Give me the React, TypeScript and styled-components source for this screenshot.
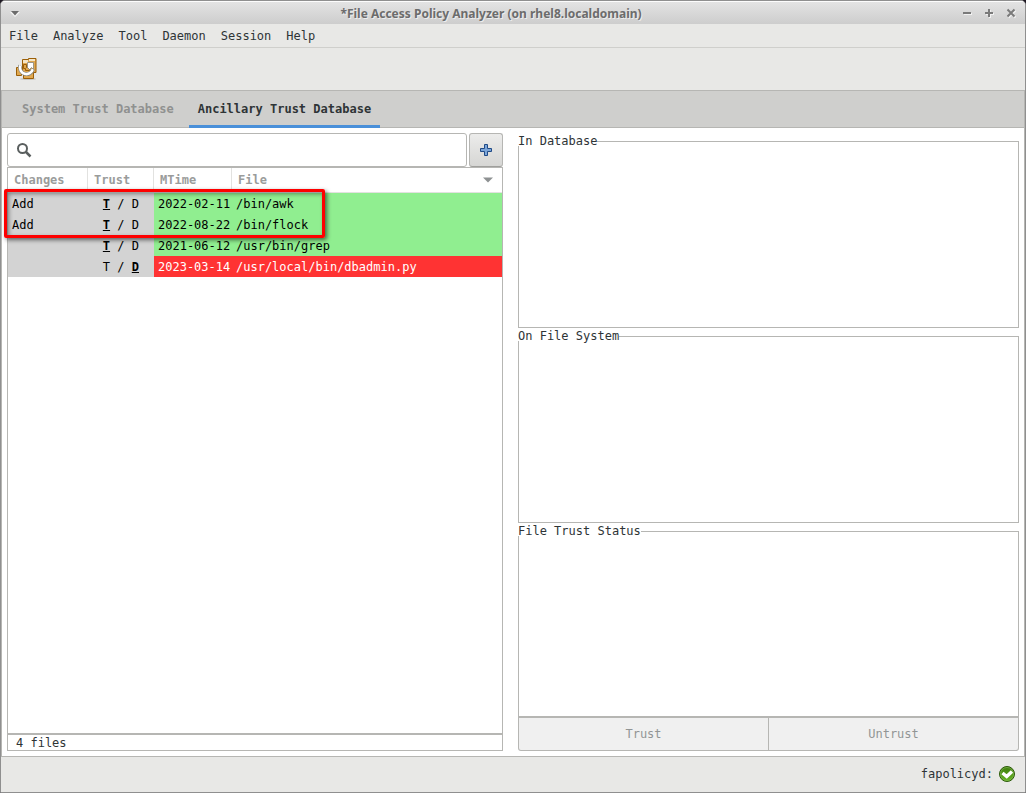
import React from "react";
import styled, { createGlobalStyle, css } from "styled-components";

const mono = `"DejaVu Sans Mono", "Liberation Mono", monospace`;
const line = "#b6b6b3";
const ink = "#2e3436";

const GlobalStyle = createGlobalStyle`
  *, *::before, *::after { box-sizing: border-box; }
  body { margin: 0; background: #1d1722; color: ${ink}; font: 12px/16px ${mono}; }
  button, input { font: inherit; color: inherit; margin: 0; }
`;

const Window = styled.div`
  display: flex;
  flex-direction: column;
  min-height: 100vh;
  border: 1px solid #8f8f8f;
  border-radius: 5px 5px 0 0;
  background: #e8e8e6;
  overflow: hidden;
`;

const TitleBar = styled.header`
  display: grid;
  grid-template-columns: 80px 1fr 124px;
  align-items: center;
  height: 23px;
  padding: 0 8px;
  border-top: 1px solid #fcfcfc;
  background: linear-gradient(#e3e3e3, #cdcdcd);
`;

const Title = styled.h1`
  margin: 0;
  padding-top: 2px;
  text-align: center;
  font: bold 12px/20px "Noto Sans", "Open Sans", sans-serif;
  color: #6c6c6c;
  text-shadow: 1px 1px 0 #ededed;
  white-space: nowrap;
`;

const WindowControls = styled.div`
  display: flex;
  justify-content: flex-end;
  gap: 10px;
`;

const GlyphButton = styled.button`
  display: flex;
  width: 12px;
  height: 12px;
  padding: 0;
  border: 0;
  background: none;
`;

const MenuBar = styled.nav`
  display: flex;
  gap: 15px;
  height: 24px;
  padding: 0 8px;
  border-bottom: 1px solid #cfcfcc;
`;

const MenuItem = styled.button`
  padding: 0;
  border: 0;
  background: none;
  line-height: 16px;
`;

const ToolBar = styled.div`
  display: flex;
  align-items: center;
  height: 42px;
  padding: 0 13px;
`;

const ToolButton = styled.button`
  display: flex;
  padding: 0;
  border: 0;
  background: none;
`;

const Notebook = styled.main`
  flex: 1;
  display: flex;
  flex-direction: column;
  border: 1px solid ${line};
  background: #fff;
`;

const TabStrip = styled.div`
  display: flex;
  gap: 6px;
  height: 37px;
  padding: 0 11px;
  background: #cfcfcd;
  box-shadow: inset 0 -1px 0 ${line};
`;

const Tab = styled.button<{ $active?: boolean }>`
  padding: 1px 9px 0;
  border: 0;
  border-bottom: 3px solid ${(p) => (p.$active ? "#4a90d9" : "transparent")};
  background: none;
  font-weight: bold;
  color: ${(p) => (p.$active ? ink : "#8f9190")};
`;

const Page = styled.div`
  flex: 1;
  display: grid;
  grid-template-columns: minmax(0, 496fr) minmax(0, 501fr);
  gap: 15px;
  padding: 5px;
`;

const Column = styled.section`
  display: flex;
  flex-direction: column;
`;

const SearchRow = styled.div`
  display: flex;
  gap: 2px;
  height: 34px;
`;

const SearchBox = styled.label`
  flex: 1;
  display: flex;
  align-items: center;
  gap: 8px;
  padding: 0 8px;
  border: 1px solid ${line};
  border-radius: 3px;
`;

const SearchInput = styled.input`
  flex: 1;
  min-width: 0;
  border: 0;
  outline: 0;
  background: none;
`;

const AddButton = styled.button`
  display: grid;
  place-items: center;
  width: 34px;
  padding: 0;
  border: 1px solid ${line};
  border-bottom-color: #9f9f9c;
  border-radius: 3px;
  background: linear-gradient(#ececeb, #d6d6d4);
`;

const ListFrame = styled.div`
  position: relative;
  flex: 1;
  border: 1px solid ${line};
`;

const FileTable = styled.table`
  width: 100%;
  table-layout: fixed;
  border-collapse: separate;
  border-spacing: 0;
`;

const HeadCell = styled.th<{ $last?: boolean }>`
  height: 25px;
  padding: 0 6px;
  border-right: ${(p) => (p.$last ? "0" : "1px solid #e2e2e0")};
  border-bottom: 1px solid #e2e2e0;
  text-align: left;
  color: #9a9c9b;
`;

const SortHeader = styled.div`
  display: flex;
  align-items: center;
  justify-content: space-between;
  padding-right: 3px;
`;

const tones = {
  plain: css`background: #d3d3d3; color: #000;`,
  good: css`background: #90ee90; color: #000;`,
  bad: css`background: #ff3333; color: #fff;`,
};

const Cell = styled.td<{ $tone: keyof typeof tones; $trust?: boolean }>`
  height: 21px;
  padding: 0 ${(p) => (p.$trust ? "15px" : "0")} 0 4px;
  text-align: ${(p) => (p.$trust ? "right" : "left")};
  white-space: pre;
  ${(p) => tones[p.$tone]}
`;

const Mark = styled.span<{ $on: boolean }>`
  font-weight: ${(p) => (p.$on ? "bold" : "normal")};
  text-decoration: ${(p) => (p.$on ? "underline" : "none")};
`;

const Highlight = styled.div`
  position: absolute;
  top: 21px;
  left: -4px;
  width: 321px;
  height: 49px;
  border: 3px solid #fe0000;
  border-radius: 2px;
  box-shadow: 2px 2px 4px rgba(0, 0, 0, 0.55), inset 2px 2px 4px rgba(0, 0, 0, 0.4);
  pointer-events: none;
`;

const FileCount = styled.div`
  height: 17px;
  padding: 0 8px;
  border: 1px solid ${line};
  line-height: 16px;
`;

const Details = styled(Column)`
  gap: 3px;
  padding-top: 3px;
`;

const Frame = styled.fieldset`
  flex: 1;
  min-width: 0;
  margin: 0;
  padding: 0;
  border: 1px solid ${line};
`;

const FrameTitle = styled.legend`
  margin-left: -1px;
  padding: 0;
  line-height: 10px;
`;

/* The buttons overlap the last frame so that their borders join. */
const Actions = styled.div`
  display: flex;
  height: 35px;
  margin-top: -5px;
`;

const ActionButton = styled.button`
  flex: 1;
  border: 1px solid ${line};
  border-top-width: 2px;
  background: #f0f0f0;
  color: #929595;
  &:first-child { border-radius: 0 0 0 3px; }
  &:last-child { border-left: 0; border-radius: 0 0 3px 0; }
`;

const StatusBar = styled.footer`
  display: flex;
  align-items: center;
  justify-content: flex-end;
  gap: 5px;
  height: 35px;
  padding: 0 9px 1px;
`;

const MenuGlyph = () => (
  <svg width="12" height="12" viewBox="0 0 12 12">
    <path d="M1 5h10L6 10z" fill="#f5f5f5" />
    <path d="M2 4h8L6 8.500z" fill="#6c6c6c" />
  </svg>
);

const ControlGlyph = ({ d }: { d: string }) => (
  <svg width="12" height="12" viewBox="0 0 12 12" fill="none" strokeWidth="2">
    <path d={d} stroke="#f2f2f2" transform="translate(1 1)" />
    <path d={d} stroke="#7a7a7a" />
  </svg>
);

const DeployIcon = () => (
  <svg width="24" height="24" viewBox="0 0 24 24">
    <ellipse cx="14" cy="22" rx="8" ry="1" fill="#000" opacity=".15" />
    <g fill="#e0a850" stroke="#9a5f08">
      <path d="M8.500 2.500h6v-1h7.500v14h-3v1h-10.500z" />
      <path d="M2.500 10.500h5v8h-5z" />
      <path d="M9.500 15.500h10v6h-10z" />
    </g>
    <path d="M9 3h5v3h-5zM15 2h6v2h-6z" fill="#f6e6c6" />
    <path d="M9.500 7.500h3v3h3v3h-4v-2h-2z" fill="#e0a850" stroke="#9a5f08" />
    <path d="M18.800 12a6.500 6.500 0 1 1-12.500-3.500" fill="none" stroke="#85857c" strokeWidth="4" />
    <path d="M18.800 12a6.500 6.500 0 1 1-12.500-3.500" fill="none" stroke="#fff" strokeWidth="2.600" />
    <path d="M13.500 5.500h6v7l-2-2-2 2-2-2z" fill="#fff" stroke="#85857c" strokeWidth=".8" />
  </svg>
);

const SearchIcon = () => (
  <svg width="16" height="16" viewBox="0 0 16 16" fill="none" stroke="#5a5f5f">
    <circle cx="6.500" cy="6.500" r="4.500" strokeWidth="2" />
    <path d="M10 10l4.500 4.500" strokeWidth="2.500" />
  </svg>
);

const PlusIcon = () => (
  <svg width="14" height="14" viewBox="0 0 14 14">
    <path
      d="M5.500 1.500h3v4h4v3h-4v4h-3v-4h-4v-3h4z"
      fill="#7ba5d8"
      stroke="#204a87"
      strokeLinejoin="round"
    />
  </svg>
);

const SortArrow = () => (
  <svg width="10" height="6" viewBox="0 0 10 6">
    <path d="M0 .500h10L5 5.500z" fill="#8e9192" />
  </svg>
);

const OkIcon = () => (
  <svg width="18" height="18" viewBox="0 0 18 18">
    <defs>
      <linearGradient id="ok" x1="0" y1="0" x2="0" y2="1">
        <stop offset="0" stopColor="#3c7a0c" />
        <stop offset="1" stopColor="#68b723" />
      </linearGradient>
    </defs>
    <circle cx="9" cy="9" r="7.500" fill="url(#ok)" stroke="#2c5a0a" />
    <circle cx="9" cy="9" r="6.500" fill="none" stroke="#7fb850" strokeWidth=".7" />
    <path d="M4.500 8l4.200 3.500 5.300-5" fill="none" stroke="#fff" strokeWidth="3.400" />
  </svg>
);

type FileRow = { change: string; trusted: boolean; mtime: string; path: string };

const files: FileRow[] = [
  { change: "Add", trusted: true, mtime: "2022-02-11", path: "/bin/awk" },
  { change: "Add", trusted: true, mtime: "2022-08-22", path: "/bin/flock" },
  { change: "", trusted: true, mtime: "2021-06-12", path: "/usr/bin/grep" },
  { change: "", trusted: false, mtime: "2023-03-14", path: "/usr/local/bin/dbadmin.py" },
];

const menus = ["File", "Analyze", "Tool", "Daemon", "Session", "Help"];
const frames = ["In Database", "On File System", "File Trust Status"];

export default function App() {
  return (
    <>
      <GlobalStyle />
      <Window>
        <TitleBar>
          <GlyphButton aria-label="Window menu"><MenuGlyph /></GlyphButton>
          <Title>*File Access Policy Analyzer (on rhel8.localdomain)</Title>
          <WindowControls>
            <GlyphButton aria-label="Minimize"><ControlGlyph d="M2 6h8" /></GlyphButton>
            <GlyphButton aria-label="Maximize"><ControlGlyph d="M2 6h8M6 2v8" /></GlyphButton>
            <GlyphButton aria-label="Close"><ControlGlyph d="M2.500 2.500l7 7M9.500 2.500l-7 7" /></GlyphButton>
          </WindowControls>
        </TitleBar>
        <MenuBar>
          {menus.map((m) => <MenuItem key={m}>{m}</MenuItem>)}
        </MenuBar>
        <ToolBar>
          <ToolButton aria-label="Deploy changes"><DeployIcon /></ToolButton>
        </ToolBar>
        <Notebook>
          <TabStrip role="tablist">
            <Tab role="tab" aria-selected={false}>System Trust Database</Tab>
            <Tab role="tab" aria-selected $active>Ancillary Trust Database</Tab>
          </TabStrip>
          <Page>
            <Column>
              <SearchRow>
                <SearchBox>
                  <SearchIcon />
                  <SearchInput type="text" aria-label="Search files" />
                </SearchBox>
                <AddButton aria-label="Add file"><PlusIcon /></AddButton>
              </SearchRow>
              <ListFrame>
                <FileTable>
                  <colgroup>
                    <col width="80" />
                    <col width="66" />
                    <col width="78" />
                    <col />
                  </colgroup>
                  <thead>
                    <tr>
                      <HeadCell>Changes</HeadCell>
                      <HeadCell>Trust</HeadCell>
                      <HeadCell>MTime</HeadCell>
                      <HeadCell $last><SortHeader>File<SortArrow /></SortHeader></HeadCell>
                    </tr>
                  </thead>
                  <tbody>
                    {files.map((f) => {
                      const tone = f.trusted ? "good" : "bad";
                      return (
                        <tr key={f.path}>
                          <Cell $tone="plain">{f.change}</Cell>
                          <Cell $tone="plain" $trust>
                            <Mark $on={f.trusted}>T</Mark> / <Mark $on={!f.trusted}>D</Mark>
                          </Cell>
                          <Cell $tone={tone}>{f.mtime}</Cell>
                          <Cell $tone={tone}>{f.path}</Cell>
                        </tr>
                      );
                    })}
                  </tbody>
                </FileTable>
                <Highlight />
              </ListFrame>
              <FileCount>4 files</FileCount>
            </Column>
            <Details>
              {frames.map((f) => (
                <Frame key={f}><FrameTitle>{f}</FrameTitle></Frame>
              ))}
              <Actions>
                <ActionButton disabled>Trust</ActionButton>
                <ActionButton disabled>Untrust</ActionButton>
              </Actions>
            </Details>
          </Page>
        </Notebook>
        <StatusBar>
          <span>fapolicyd:</span>
          <OkIcon />
        </StatusBar>
      </Window>
    </>
  );
}
